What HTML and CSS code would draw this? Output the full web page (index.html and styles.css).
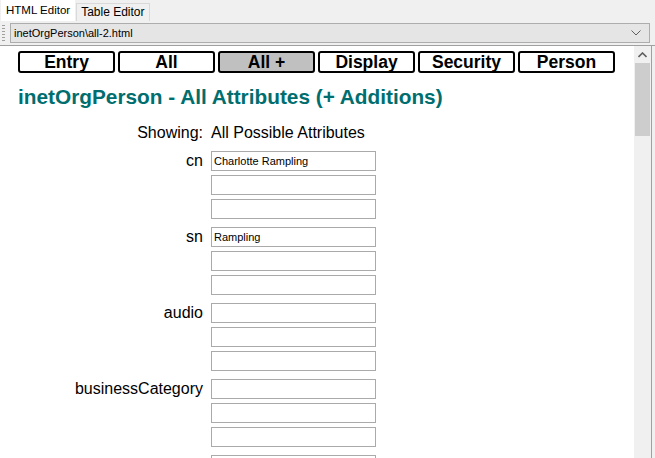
FILE: index.html
```html
<!DOCTYPE html>
<html lang="en">
<head>
    <meta charset="UTF-8">
    <title>HTML Editor</title>
    <link rel="stylesheet" href="styles.css">
</head>
<body>
    <div class="tabs">
        <div class="tab active">HTML Editor</div>
        <div class="tab">Table Editor</div>
    </div>
    <div class="toolbar">
        <div class="grip"></div>
        <div class="combo">
            <span>inetOrgPerson\all-2.html</span>
            <svg class="chev" width="10" height="6" viewBox="0 0 10 6"><path d="M0.5 0.5 L5 5 L9.5 0.5" fill="none" stroke="#606060" stroke-width="1"/></svg>
        </div>
    </div>
    <div class="frame">
        <div class="page">
            <div class="nav">
                <div class="nav-btn">Entry</div>
                <div class="nav-btn">All</div>
                <div class="nav-btn current">All +</div>
                <div class="nav-btn">Display</div>
                <div class="nav-btn">Security</div>
                <div class="nav-btn">Person</div>
            </div>
            <h1>inetOrgPerson - All Attributes (+ Additions)</h1>
            <div class="form">
                <div class="label">Showing:</div>
                <div class="value">All Possible Attributes</div>

                <div class="label">cn</div>
                <div class="inputs">
                    <input type="text" value="Charlotte Rampling">
                    <input type="text">
                    <input type="text">
                </div>

                <div class="label">sn</div>
                <div class="inputs">
                    <input type="text" value="Rampling">
                    <input type="text">
                    <input type="text">
                </div>

                <div class="label">audio</div>
                <div class="inputs">
                    <input type="text">
                    <input type="text">
                    <input type="text">
                </div>

                <div class="label">businessCategory</div>
                <div class="inputs">
                    <input type="text">
                    <input type="text">
                    <input type="text">
                </div>

                <div class="label"></div>
                <div class="inputs">
                    <input type="text">
                </div>
            </div>
        </div>
        <div class="scrollbar">
            <div class="arrow">
                <svg width="9" height="6" viewBox="0 0 9 6"><path d="M0.5 5 L4.5 1 L8.5 5" fill="none" stroke="#606060" stroke-width="1.6"/></svg>
            </div>
            <div class="thumb"></div>
        </div>
    </div>
</body>
</html>
```

FILE: styles.css
```css
html, body {
    margin: 0;
    height: 100%;
    overflow: hidden;
}
body {
    background: #f0f0f0;
    font-family: "Liberation Sans", Arial, sans-serif;
    display: flex;
    flex-direction: column;
}
.tabs {
    display: flex;
    align-items: flex-end;
    height: 21px;
    padding-left: 1px;
}
.tab {
    font-size: 12px;
    color: #000;
    padding: 0 4px;
    height: 17px;
    line-height: 17px;
    border: 1px solid #d9d9d9;
    border-bottom: none;
    background: #f0f0f0;
}
.tab.active {
    height: 20px;
    line-height: 19px;
    font-size: 11.5px;
    background: #fff;
    border-color: #fff;
    margin-right: 1px;
}
.toolbar {
    display: flex;
    align-items: center;
    height: 24px;
    padding-left: 2px;
    padding-right: 5px;
    background: #f0f0f0;
}
.grip {
    width: 3px;
    height: 17px;
    margin-right: 5px;
    background: repeating-linear-gradient(#a0a0a0 0 1px, transparent 1px 3px);
}
.combo {
    flex: 1;
    height: 18px;
    border: 1px solid #adadad;
    background: #e5e5e5;
    display: flex;
    align-items: center;
    justify-content: space-between;
    padding: 0 8px 0 3px;
    font-size: 11px;
}
.chev {
    display: block;
}
.frame {
    flex: 1;
    display: flex;
    border-top: 1px solid #a0a0a0;
    min-height: 0;
}
.page {
    flex: 1;
    background: #fff;
    padding: 5px 0 0 18px;
    overflow: hidden;
}
.nav {
    display: flex;
    gap: 3px;
}
.nav-btn {
    width: 93px;
    height: 18px;
    border: 2px solid #000;
    border-radius: 3px;
    text-align: center;
    font-weight: bold;
    font-size: 17.5px;
    line-height: 19px;
    color: #000;
    overflow: hidden;
}
.nav-btn.current {
    background: #c0c0c0;
}
h1 {
    margin: 12px 0 14px;
    font-size: 20.8px;
    line-height: 24px;
    color: #006e6e;
}
.form {
    display: grid;
    grid-template-columns: 185px 165px;
    column-gap: 8px;
    row-gap: 8px;
    font-size: 16px;
    line-height: 20px;
    color: #000;
}
.label {
    text-align: right;
}
.inputs {
    display: flex;
    flex-direction: column;
    gap: 4px;
}
input {
    box-sizing: border-box;
    width: 165px;
    height: 20px;
    margin: 0;
    border: 1px solid #aaaaaa;
    padding: 0 2px;
    font-family: "Liberation Sans", Arial, sans-serif;
    font-size: 11px;
    color: #000;
    outline: none;
}
.scrollbar {
    width: 17px;
    background: #f0f0f0;
    border-right: 1px solid #a0a0a0;
    margin-right: 3px;
    display: flex;
    flex-direction: column;
    align-items: center;
}
.arrow {
    height: 17px;
    width: 17px;
    display: flex;
    align-items: center;
    justify-content: center;
}
.thumb {
    width: 15px;
    height: 73px;
    background: #cdcdcd;
}
```
